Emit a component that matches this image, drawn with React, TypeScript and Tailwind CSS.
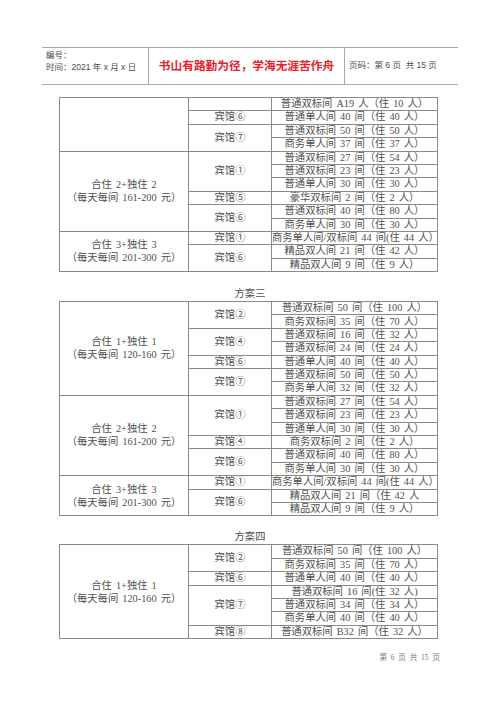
import React from "react";

type Hotel = { name: string; rooms: string[] };
type Group = { label: string[]; hotels: Hotel[] };

const FONT = { fontFamily: '"Liberation Serif", "Noto Sans CJK SC", serif' };

const table1: Group[] = [
  {
    label: [],
    hotels: [
      { name: "", rooms: ["普通双标间 A19 人（住 10 人）"] },
      { name: "宾馆⑥", rooms: ["普通单人间 40 间（住 40 人）"] },
      { name: "宾馆⑦", rooms: ["普通双标间 50 间（住 50 人）", "商务单人间 37 间（住 37 人）"] },
    ],
  },
  {
    label: ["合住 2+独住 2", "（每天每间 161-200 元）"],
    hotels: [
      {
        name: "宾馆①",
        rooms: ["普通双标间 27 间（住 54 人）", "普通双标间 23 间（住 23 人）", "普通单人间 30 间（住 30 人）"],
      },
      { name: "宾馆⑤", rooms: ["豪华双标间 2 间（住 2 人）"] },
      { name: "宾馆⑥", rooms: ["普通双标间 40 间（住 80 人）", "商务单人间 30 间（住 30 人）"] },
    ],
  },
  {
    label: ["合住 3+独住 3", "（每天每间 201-300 元）"],
    hotels: [
      { name: "宾馆①", rooms: ["商务单人间/双标间 44 间(住 44 人）"] },
      { name: "宾馆⑥", rooms: ["精品双人间 21 间（住 42 人）", "精品双人间 9 间（住 9 人）"] },
    ],
  },
];

const table2: Group[] = [
  {
    label: ["合住 1+独住 1", "（每天每间 120-160 元）"],
    hotels: [
      { name: "宾馆②", rooms: ["普通双标间 50 间（住 100 人）", "商务双标间 35 间（住 70 人）"] },
      { name: "宾馆④", rooms: ["普通双标间 16 间（住 32 人）", "普通双标间 24 间（住 24 人）"] },
      { name: "宾馆⑥", rooms: ["普通单人间 40 间（住 40 人）"] },
      { name: "宾馆⑦", rooms: ["普通双标间 50 间（住 50 人）", "商务单人间 32 间（住 32 人）"] },
    ],
  },
  {
    label: ["合住 2+独住 2", "（每天每间 161-200 元）"],
    hotels: [
      {
        name: "宾馆①",
        rooms: ["普通双标间 27 间（住 54 人）", "普通双标间 23 间（住 23 人）", "普通单人间 30 间（住 30 人）"],
      },
      { name: "宾馆④", rooms: ["商务双标间 2 间（住 2 人）"] },
      { name: "宾馆⑥", rooms: ["普通双标间 40 间（住 80 人）", "商务单人间 30 间（住 30 人）"] },
    ],
  },
  {
    label: ["合住 3+独住 3", "（每天每间 201-300 元）"],
    hotels: [
      { name: "宾馆①", rooms: ["商务单人间/双标间 44 间(住 44 人）"] },
      { name: "宾馆⑥", rooms: ["精品双人间 21 间（住 42 人", "精品双人间 9 间（住 9 人）"] },
    ],
  },
];

const table3: Group[] = [
  {
    label: ["合住 1+独住 1", "（每天每间 120-160 元）"],
    hotels: [
      { name: "宾馆②", rooms: ["普通双标间 50 间（住 100 人）", "商务双标间 35 间（住 70 人）"] },
      { name: "宾馆⑥", rooms: ["普通单人间 40 间（住 40 人）"] },
      {
        name: "宾馆⑦",
        rooms: ["普通双标间 16 间(住 32 人)", "普通双标间 34 间（住 34 人）", "商务单人间 40 间（住 40 人）"],
      },
      { name: "宾馆⑧", rooms: ["普通双标间 B32 间（住 32 人）"] },
    ],
  },
];

function DataTable({ groups }: { groups: Group[] }) {
  const rows: React.ReactNode[] = [];
  groups.forEach((g, gi) => {
    const total = g.hotels.reduce((s, h) => s + h.rooms.length, 0);
    let first = true;
    g.hotels.forEach((h, hi) => {
      h.rooms.forEach((r, ri) => {
        rows.push(
          <tr key={`${gi}-${hi}-${ri}`} className="h-[13.4px]">
            {first && (
              <td
                rowSpan={total}
                className="w-[129px] border border-[#8a8a8a] p-0 text-center align-middle leading-[13px]"
              >
                {g.label.map((l, i) => (
                  <div key={i} className="whitespace-pre">
                    {l}
                  </div>
                ))}
              </td>
            )}
            {ri === 0 && (
              <td
                rowSpan={h.rooms.length}
                className="w-[83px] border border-[#8a8a8a] p-0 text-center align-middle leading-none"
              >
                {h.name}
              </td>
            )}
            <td className="border border-[#8a8a8a] p-0 text-center align-middle leading-none whitespace-pre">
              {r}
            </td>
          </tr>
        );
        first = false;
      });
    });
  });
  return (
    <table
      className="ml-[59px] w-[379px] table-fixed border-collapse text-[10.3px] text-[#505050] [word-spacing:1.5px]"
      style={FONT}
    >
      <colgroup>
        <col className="w-[129px]" />
        <col className="w-[83px]" />
        <col />
      </colgroup>
      <tbody>{rows}</tbody>
    </table>
  );
}

export default function App() {
  return (
    <div className="relative h-[707px] w-[500px] overflow-hidden bg-white">
      <div className="pt-[47px]">
        {/* Header */}
        <div
          className="mx-[42px] flex h-[38px] border-y border-[#a8a8a8] text-[8.5px] text-[#4a4a4a]"
          style={{ fontFamily: '"Liberation Sans", "Noto Sans CJK SC", sans-serif' }}
        >
          <div className="flex w-[106px] flex-col pl-[4px] pt-[2px] leading-[11.5px]">
            <span>编号：</span>
            <span>时间：2021 年 x 月 x 日</span>
          </div>
          <div className="flex w-[197px] items-center justify-center border-x border-[#a8a8a8] pb-[1px]">
            <span className="text-[11.7px] font-bold text-[#e8202a]">书山有路勤为径，学海无涯苦作舟</span>
          </div>
          <div className="flex flex-1 items-center pl-[4px] pb-[1px]">
            <span>页码：第 6 页&nbsp;&nbsp;共 15 页</span>
          </div>
        </div>

        <div className="mt-[12px]">
          <DataTable groups={table1} />
        </div>

        <div
          className="mt-[15px] h-[13px] text-center text-[10.3px] leading-[13px] text-[#505050]"
          style={FONT}
        >
          方案三
        </div>
        <div className="mt-[1px]">
          <DataTable groups={table2} />
        </div>

        <div
          className="mt-[14px] h-[13px] text-center text-[10.3px] leading-[13px] text-[#505050]"
          style={FONT}
        >
          方案四
        </div>
        <div className="mt-[1px]">
          <DataTable groups={table3} />
        </div>

        <div
          className="mt-[13px] pr-[60px] text-right text-[7.5px] text-[#777] [word-spacing:2px]"
          style={FONT}
        >
          第 6 页 共 15 页
        </div>
      </div>
    </div>
  );
}
